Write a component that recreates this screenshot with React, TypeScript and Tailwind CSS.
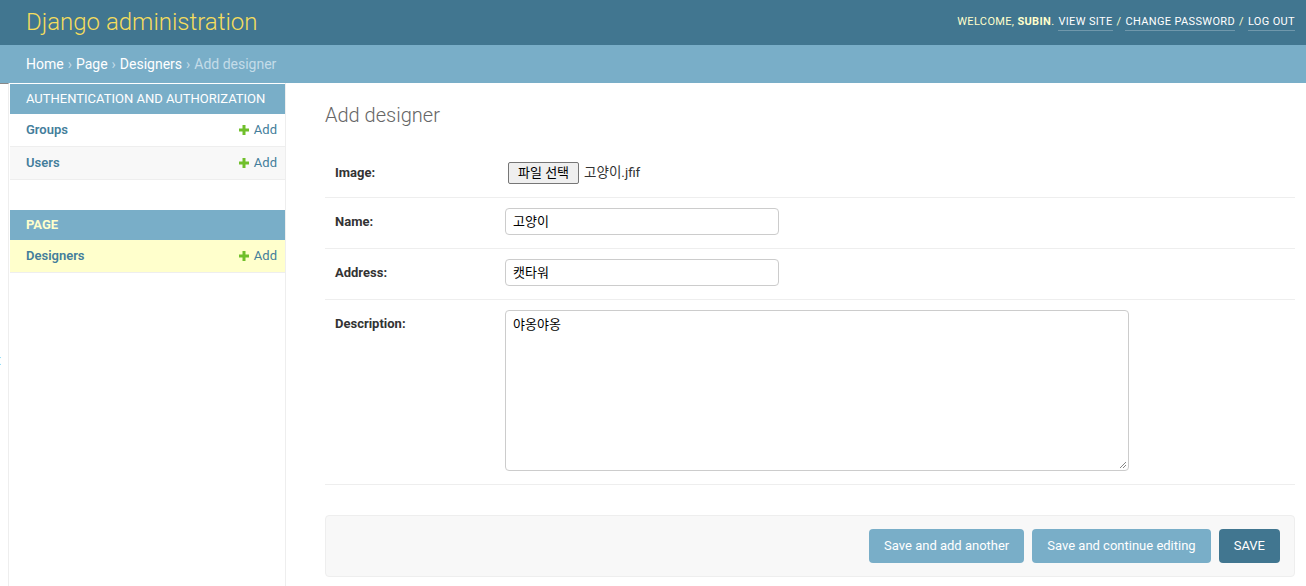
const font = "font-['Roboto','Noto_Sans_CJK_KR',sans-serif]";

function PlusIcon() {
  return (
    <svg width="10" height="10" viewBox="0 0 10 10" className="shrink-0">
      <rect x="3.5" y="0" width="3" height="10" fill="#70bf2b" />
      <rect x="0" y="3.5" width="10" height="3" fill="#70bf2b" />
    </svg>
  );
}

function SideRow({ label, alt, current }: { label: string; alt?: boolean; current?: boolean }) {
  const bg = current ? 'bg-[#ffffcc]' : alt ? 'bg-[#f8f8f8]' : 'bg-white';
  return (
    <div className={`h-[33px] flex items-center justify-between pl-[16px] pr-[8px] border-b border-[#eeeeee] ${bg}`}>
      <span className="text-[13px] font-semibold text-[#447e9b]">{label}</span>
      <span className="flex items-center gap-[5px] text-[13px] text-[#447e9b]">
        <PlusIcon />
        Add
      </span>
    </div>
  );
}

function FormRow({ label, first, children }: { label: string; first?: boolean; children: React.ReactNode }) {
  return (
    <div
      className={`flex items-start px-[10px] border-b border-[#eeeeee] ${
        first ? 'pt-[12px] pb-[11px]' : 'pt-[10px] pb-[13px]'
      }`}
    >
      <label className="w-[170px] h-[27px] flex items-center text-[13px] font-bold text-[#333333]">{label}</label>
      {children}
    </div>
  );
}

export default function App() {
  return (
    <div className={`${font} w-[1306px] h-[586px] overflow-hidden bg-white flex flex-col`}>
      <header className="h-[45px] bg-[#417690] flex items-center justify-between pl-[26px] pr-[11px]">
        <h1 className="text-[24px] font-light text-[#f5dd5d] leading-none -mt-[2px]">Django administration</h1>
        <div className="text-[11px] tracking-[0.35px] text-[#ffffcc] uppercase flex items-center">
          <span>Welcome, </span>
          <strong className="font-bold ml-[3px]">Subin</strong>
          <span>. </span>
          <a className="ml-[4px] text-white border-b border-white/25">View site</a>
          <span className="mx-[4px]">/</span>
          <a className="text-white border-b border-white/25">Change password</a>
          <span className="mx-[4px]">/</span>
          <a className="text-white border-b border-white/25">Log out</a>
        </div>
      </header>
      <div className="h-[38px] bg-[#79aec8] flex items-center pl-[26px] text-[14px] text-white">
        <a>Home</a>
        <span className="mx-[4px] text-[#c4dce8]">›</span>
        <a>Page</a>
        <span className="mx-[4px] text-[#c4dce8]">›</span>
        <a>Designers</a>
        <span className="mx-[4px] text-[#c4dce8]">›</span>
        <span className="text-[#c4dce8]">Add designer</span>
      </div>
      <div className="flex flex-1">
        <div className="w-[9px] border-r border-[#eeeeee] border-t border-t-[#888888] overflow-hidden pt-[266px]">
          <span className="block -ml-[8px] text-[20px] leading-none text-[#447e9b]">«</span>
        </div>
        <nav className="w-[277px] border-r border-[#eeeeee] pt-[1px] pl-[1px]">
          <div className="h-[30px] bg-[#79aec8] flex items-center pl-[16px] text-[13px] text-white uppercase">
            Authentication and Authorization
          </div>
          <SideRow label="Groups" />
          <SideRow label="Users" alt />
          <div className="h-[30px]" />
          <div className="h-[30px] bg-[#79aec8] flex items-center pl-[16px] text-[13px] font-bold text-[#ffffcc] uppercase">
            Page
          </div>
          <SideRow label="Designers" current />
        </nav>
        <main className="flex-1 pt-[20px] pl-[39px] pr-[11px]">
          <h2 className="text-[20px] font-light text-[#666666] leading-[24px] mb-[20px]">Add designer</h2>
          <FormRow label="Image:" first>
            <div className="h-[27px] flex items-center pl-[3px] text-[13px]">
              <span className="h-[22px] px-[9px] flex items-center bg-[#efefef] border border-[#767676] rounded-[2px] text-black">
                파일 선택
              </span>
              <span className="ml-[5px] text-[#333333] text-[13.5px]">고양이.jfif</span>
            </div>
          </FormRow>
          <FormRow label="Name:">
            <div className="w-[274px] h-[27px] border border-[#cccccc] rounded-[4px] flex items-center px-[7px] text-[13px] text-black">
              고양이
            </div>
          </FormRow>
          <FormRow label="Address:">
            <div className="w-[274px] h-[27px] border border-[#cccccc] rounded-[4px] flex items-center px-[7px] text-[13px] text-black">
              캣타워
            </div>
          </FormRow>
          <FormRow label="Description:">
            <div className="relative w-[624px] h-[161px] border border-[#cccccc] rounded-[4px] px-[7px] pt-[4px] text-[13px] text-black">
              야옹야옹
              <svg className="absolute right-[1px] bottom-[1px]" width="9" height="9" viewBox="0 0 9 9">
                <path d="M8 2 L2 8 M8 5 L5 8" stroke="#888" strokeWidth="1" />
              </svg>
            </div>
          </FormRow>
          <div className="mt-[30px] h-[62px] bg-[#f8f8f8] border border-[#eeeeee] rounded-[4px] flex items-center justify-end gap-[8px] pr-[14px]">
            <span className="h-[34px] px-[15px] flex items-center rounded-[4px] bg-[#79aec8] text-white text-[13px]">
              Save and add another
            </span>
            <span className="h-[34px] px-[15px] flex items-center rounded-[4px] bg-[#79aec8] text-white text-[13px]">
              Save and continue editing
            </span>
            <span className="h-[34px] px-[15px] flex items-center rounded-[4px] bg-[#417690] text-white text-[13px]">
              SAVE
            </span>
          </div>
        </main>
      </div>
    </div>
  );
}
